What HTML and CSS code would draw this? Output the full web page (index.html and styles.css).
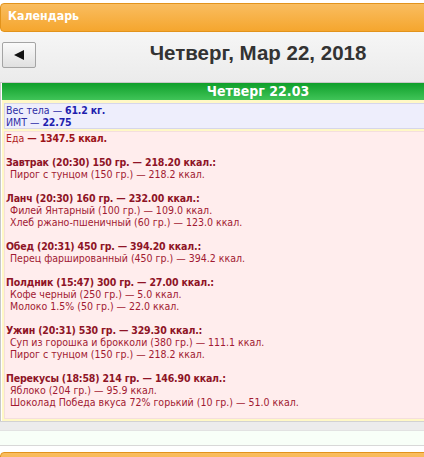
FILE: index.html
```html
<!DOCTYPE html>
<html lang="ru">
<head>
<meta charset="utf-8">
<title>Календарь</title>
<link rel="stylesheet" href="styles.css">
</head>
<body>
<div class="page">
  <div class="widget-head">Календарь</div>
  <div class="nav">
    <button class="nav-btn" type="button" aria-label="Назад"><span class="tri tri-left"></span></button>
    <h1 class="nav-title">Четверг, Мар 22, 2018</h1>
    <button class="nav-btn" type="button" aria-label="Вперёд"><span class="tri tri-right"></span></button>
  </div>
  <div class="day">
    <div class="day-head">Четверг 22.03</div>
    <div class="day-body">
      <div class="weight">
        <div>Вес тела — <b>61.2 кг.</b></div>
        <div>ИМТ — <b>22.75</b></div>
      </div>
      <div class="food">
        <div class="total">Еда <b>— 1347.5 ккал.</b></div>
        <div class="meal">
          <div class="meal-title">Завтрак (20:30) 150 гр. — 218.20 ккал.:</div>
          <div class="item">Пирог с тунцом (150 гр.) — 218.2 ккал.</div>
        </div>
        <div class="meal">
          <div class="meal-title">Ланч (20:30) 160 гр. — 232.00 ккал.:</div>
          <div class="item">Филей Янтарный (100 гр.) — 109.0 ккал.</div>
          <div class="item">Хлеб ржано-пшеничный (60 гр.) — 123.0 ккал.</div>
        </div>
        <div class="meal">
          <div class="meal-title">Обед (20:31) 450 гр. — 394.20 ккал.:</div>
          <div class="item">Перец фаршированный (450 гр.) — 394.2 ккал.</div>
        </div>
        <div class="meal">
          <div class="meal-title">Полдник (15:47) 300 гр. — 27.00 ккал.:</div>
          <div class="item">Кофе черный (250 гр.) — 5.0 ккал.</div>
          <div class="item">Молоко 1.5% (50 гр.) — 22.0 ккал.</div>
        </div>
        <div class="meal">
          <div class="meal-title">Ужин (20:31) 530 гр. — 329.30 ккал.:</div>
          <div class="item">Суп из горошка и брокколи (380 гр.) — 111.1 ккал.</div>
          <div class="item">Пирог с тунцом (150 гр.) — 218.2 ккал.</div>
        </div>
        <div class="meal">
          <div class="meal-title">Перекусы (18:58) 214 гр. — 146.90 ккал.:</div>
          <div class="item">Яблоко (204 гр.) — 95.9 ккал.</div>
          <div class="item">Шоколад Победа вкуса 72% горький (10 гр.) — 51.0 ккал.</div>
        </div>
      </div>
    </div>
  </div>
  <div class="footer-bar"></div>
  <div class="footer-strip"></div>
  <div class="widget-head widget-next"></div>
</div>
</body>
</html>
```

FILE: styles.css
```css
html, body {
  margin: 0;
  padding: 0;
  background: #fff;
  overflow: hidden;
}

body {
  font-family: "DejaVu Sans Condensed", "DejaVu Sans", sans-serif;
  font-stretch: condensed;
}

.page {
  width: 516px;
  padding-top: 3px;
}

.widget-head {
  height: 25px;
  padding: 0 0 2px 7px;
  border: 1px solid #e2931c;
  border-radius: 4px;
  background: linear-gradient(#f9bd60, #f5a62e);
  color: #fff;
  font-weight: bold;
  font-size: 12.3px;
  line-height: 25px;
}

.nav {
  display: grid;
  grid-template-columns: 34px 1fr 34px;
  align-items: start;
  height: 40px;
  padding: 10px 2px 0;
  background: linear-gradient(#f6f6f6, #ebebeb);
}

.nav-btn {
  box-sizing: border-box;
  width: 34px;
  height: 26px;
  padding: 0;
  border: 1px solid #a4a4a4;
  border-radius: 2px;
  background: linear-gradient(#fafafa, #e0e0e0);
  display: flex;
  align-items: center;
  justify-content: center;
}

.tri {
  width: 0;
  height: 0;
  border-top: 5px solid transparent;
  border-bottom: 5px solid transparent;
}

.tri-left {
  border-right: 10px solid #111;
}

.tri-right {
  border-left: 10px solid #111;
}

.nav-title {
  margin: -1px 0 0;
  font: bold 20.5px/23px "Liberation Sans", Arial, sans-serif;
  color: #333;
  text-align: center;
}

.day {
  border-top: 1px solid #c8c8c8;
  border-left: 1px solid #c8c8c8;
  border-right: 1px solid #c8c8c8;
  padding: 0 1px;
  background: #fff;
}

.day-head {
  height: 17px;
  line-height: 17px;
  background: linear-gradient(#0f9f2a, #40c458);
  color: #fff;
  font-weight: bold;
  font-size: 14px;
  text-align: center;
}

.day-body {
  background: #fff8c6;
  padding: 3px 2px 2px;
}

.weight {
  border: 1px solid #d6d6ea;
  background: #eeeefc;
  padding: 0 1px;
  font-size: 10.5px;
  line-height: 12px;
  color: #2e2ea6;
}

.weight b {
  color: #1e1eae;
  letter-spacing: -0.18px;
}

.food {
  margin-top: 2px;
  border: 1px solid #f4dede;
  background: #ffeded;
  padding: 0 1px 10px;
  font-size: 10.5px;
  line-height: 12px;
  color: #a11a32;
}

.total {
  color: #b01c24;
}

.total b {
  color: #9c1418;
  letter-spacing: -0.18px;
}

.meal {
  margin-top: 12px;
}

.meal-title {
  font-weight: bold;
  letter-spacing: -0.18px;
  color: #8e1426;
}

.item {
  padding-left: 4px;
}

.footer-bar {
  height: 8px;
  border-top: 1px solid #d2d2d2;
  background: #ececec;
}

.footer-strip {
  height: 14px;
  border-top: 1px solid #e2e2e2;
  border-bottom: 1px solid #d8d8d8;
  background: #f8fff8;
}

.widget-next {
  margin-top: 6px;
}
```
